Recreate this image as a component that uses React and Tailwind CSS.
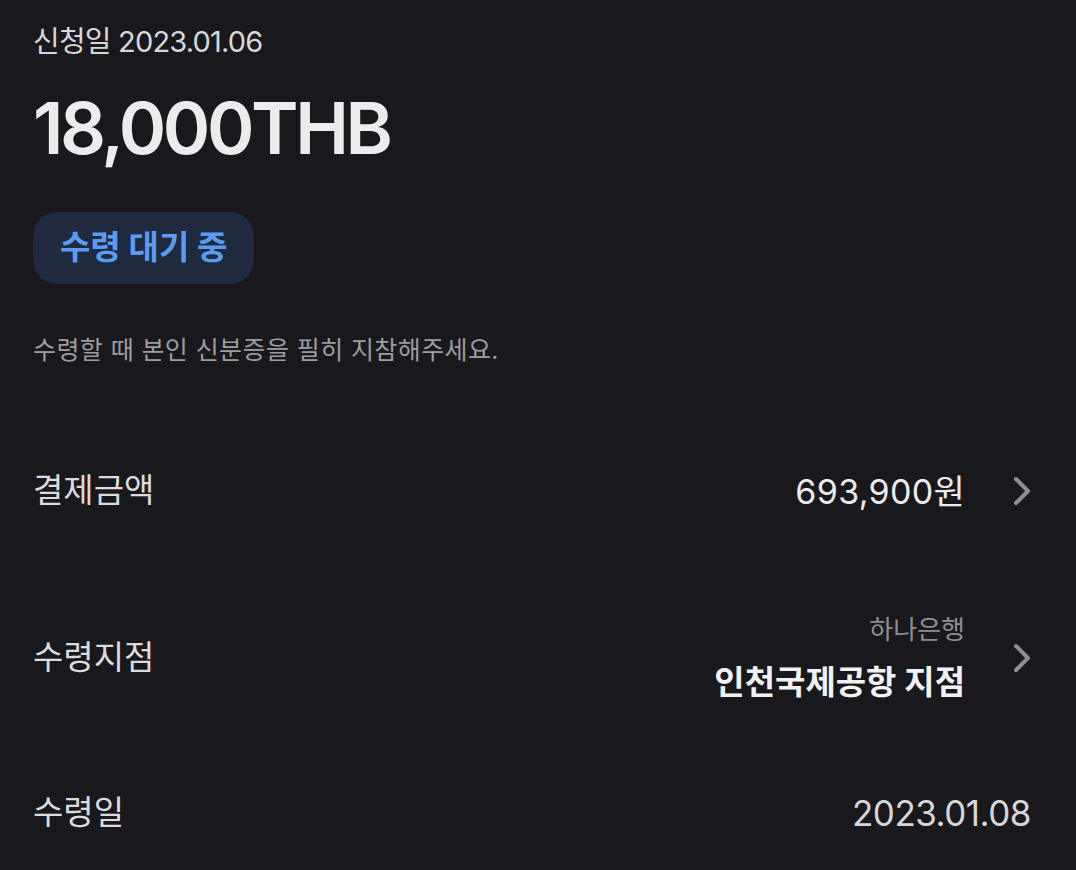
import { ChevronRight } from "lucide-react";

const font = { fontFamily: '"Inter", "Noto Sans CJK KR", sans-serif' };

const Row = ({ label, children, arrow, className }) => (
  <div className={`flex items-center justify-between ${className}`}>
    <span className="text-[33px] text-[#dcdcde]">{label}</span>
    <div className="flex items-center">
      {children}
      {arrow && (
        <ChevronRight
          size={48}
          strokeWidth={2}
          className="text-[#8e8e93] ml-[33px] -mr-[15px]"
        />
      )}
    </div>
  </div>
);

export default function App() {
  return (
    <div
      className="w-[1076px] h-[870px] bg-[#19181d] pl-[33px] pr-[45px] pt-[24px] overflow-hidden"
      style={font}
    >
      <div className="text-[29px] leading-[36px] text-[#d8d8da] tracking-[-0.8px]">
        신청일 2023.01.06
      </div>
      <div className="mt-[32px] text-[72px] leading-[72px] font-semibold text-[#ececee] tracking-[-3.4px]">
        18,000THB
      </div>

      <div className="mt-[48px] inline-flex items-center h-[72px] px-[27px] rounded-[24px] bg-[#1f2a3e]">
        <span className="text-[33px] font-bold text-[#5b9cf2]">수령 대기 중</span>
      </div>

      <div className="mt-[50px] text-[25px] leading-[32px] text-[#9c9ca1] tracking-[0.4px]">
        수령할 때 본인 신분증을 필히 지참해주세요.
      </div>

      <Row label="결제금액" arrow className="mt-[101px] h-[48px]">
        <span className="text-[34px] text-[#ececee] tracking-[0.3px]">693,900원</span>
      </Row>

      <Row label="수령지점" arrow className="mt-[99px]">
        <div className="flex flex-col items-end">
          <span className="text-[26px] leading-[32px] text-[#8e8e93]">하나은행</span>
          <span className="mt-[16px] text-[33px] leading-[40px] font-bold text-[#f2f2f4]">
            인천국제공항 지점
          </span>
        </div>
      </Row>

      <Row label="수령일" className="mt-[87px] h-[48px]">
        <span className="text-[35px] text-[#d6d6d8] tracking-[-0.5px]">2023.01.08</span>
      </Row>
    </div>
  );
}
